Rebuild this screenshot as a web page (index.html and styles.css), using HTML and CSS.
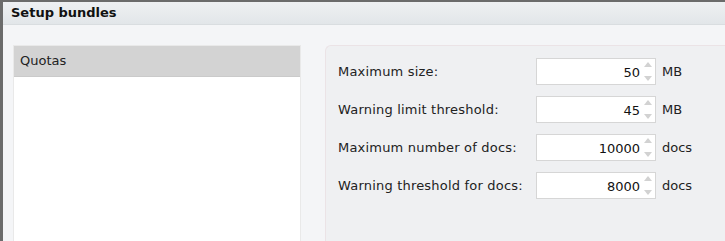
FILE: index.html
```html
<!DOCTYPE html>
<html lang="en">
<head>
    <meta charset="UTF-8">
    <title>Setup bundles</title>
    <link rel="stylesheet" href="styles.css">
</head>
<body>
    <div class="window">
        <div class="titlebar">Setup bundles</div>
        <div class="content">
            <div class="sidebar">
                <div class="item selected">Quotas</div>
            </div>
            <div class="panel">
                <div class="row">
                    <label for="max-size">Maximum size:</label>
                    <div class="spin">
                        <input id="max-size" type="text" value="50">
                        <span class="arrows"><span class="up"></span><span class="down"></span></span>
                    </div>
                    <span class="unit">MB</span>
                </div>
                <div class="row">
                    <label for="warn-size">Warning limit threshold:</label>
                    <div class="spin">
                        <input id="warn-size" type="text" value="45">
                        <span class="arrows"><span class="up"></span><span class="down"></span></span>
                    </div>
                    <span class="unit">MB</span>
                </div>
                <div class="row">
                    <label for="max-docs">Maximum number of docs:</label>
                    <div class="spin">
                        <input id="max-docs" type="text" value="10000">
                        <span class="arrows"><span class="up"></span><span class="down"></span></span>
                    </div>
                    <span class="unit">docs</span>
                </div>
                <div class="row">
                    <label for="warn-docs">Warning threshold for docs:</label>
                    <div class="spin">
                        <input id="warn-docs" type="text" value="8000">
                        <span class="arrows"><span class="up"></span><span class="down"></span></span>
                    </div>
                    <span class="unit">docs</span>
                </div>
            </div>
        </div>
    </div>
</body>
</html>
```

FILE: styles.css
```css
html, body {
    margin: 0;
    padding: 0;
    height: 100%;
    overflow: hidden;
}
body {
    font-family: "DejaVu Sans", Verdana, sans-serif;
    font-size: 12px;
    color: #222;
    background-color: #6b6b6b;
}
.window {
    margin: 2px 0 0 3px;
    height: calc(100% - 2px);
    background-color: #f4f5f7;
    display: flex;
    flex-direction: column;
}
.titlebar {
    height: 22px;
    line-height: 22px;
    padding-left: 8px;
    font-weight: bold;
    font-size: 13px;
    color: #111;
    background: linear-gradient(#eef0f2, #e2e6e9);
    border-bottom: 1px solid #d9dde0;
}
.content {
    flex: 1;
    display: flex;
    padding: 20px 0 0 10px;
    gap: 24px;
}
.sidebar {
    width: 286px;
    background-color: #fff;
    border: 1px solid #e9e9e9;
    border-bottom: none;
}
.item {
    height: 30px;
    line-height: 30px;
    padding-left: 6px;
    font-size: 13px;
}
.item.selected {
    background-color: #d3d3d3;
    border-bottom: 1px solid #cacaca;
}
.panel {
    flex: 1;
    background-color: #eff0f2;
    border: 1px solid #ebe3e6;
    border-right: none;
    border-bottom: none;
    border-top-left-radius: 6px;
    padding: 12px 0 0 12px;
    display: flex;
    flex-direction: column;
    gap: 11px;
}
.row {
    display: flex;
    align-items: center;
    height: 27px;
}
.row label {
    width: 198px;
    font-size: 13px;
    letter-spacing: 0.2px;
}
.spin {
    position: relative;
    width: 118px;
    height: 25px;
    background-color: #fff;
    border: 1px solid #d6d6d6;
}
.spin input {
    border: none;
    outline: none;
    width: 100%;
    height: 100%;
    box-sizing: border-box;
    padding: 2px 15px 0 0;
    text-align: right;
    font-family: inherit;
    font-size: 13px;
    color: #111;
    background: transparent;
}
.arrows {
    position: absolute;
    right: 3px;
    top: 3px;
    width: 8px;
    height: 19px;
    display: flex;
    flex-direction: column;
    justify-content: space-between;
}
.up, .down {
    width: 0;
    height: 0;
    border-left: 4px solid transparent;
    border-right: 4px solid transparent;
}
.up {
    border-bottom: 5px solid #d2d2d2;
}
.down {
    border-top: 5px solid #d2d2d2;
}
.unit {
    margin-left: 6px;
    font-size: 13px;
}
```
